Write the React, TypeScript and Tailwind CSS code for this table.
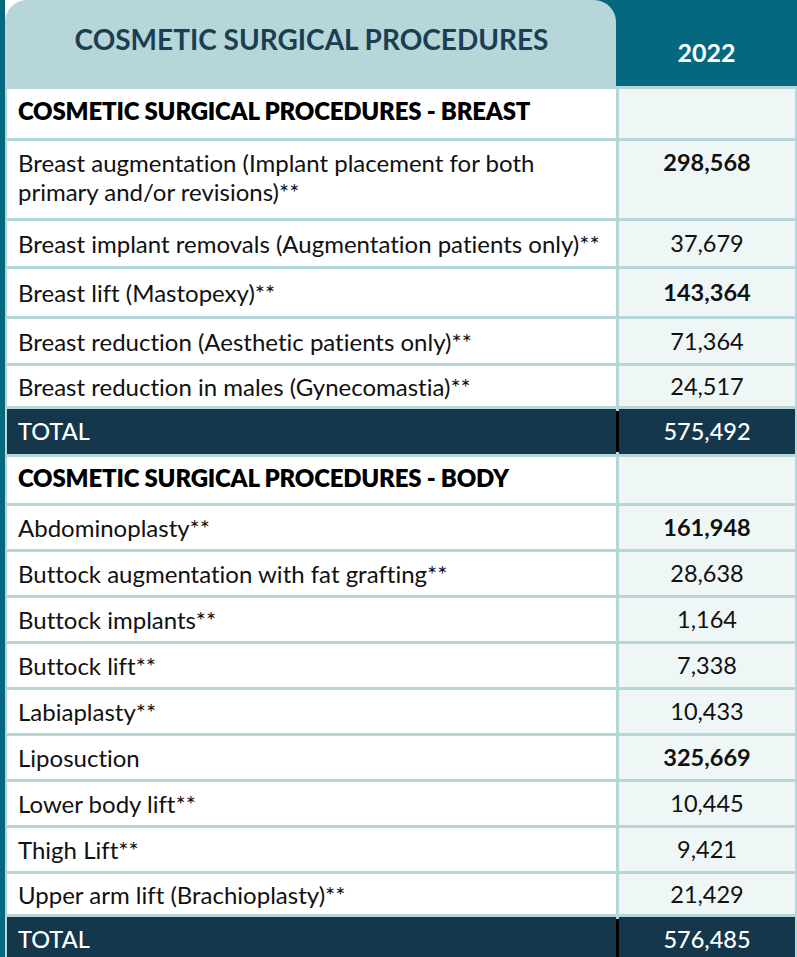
import React from "react";

type Row = {
  label: string;
  value?: string;
  kind: "section" | "item" | "total";
  bold?: boolean;
  h: string;
};

// heights measured off the reference, 3px light-blue rule between rows
const rows: Row[] = [
  { label: "COSMETIC SURGICAL PROCEDURES - BREAST", kind: "section", h: "h-[49px]" },
  {
    label: "Breast augmentation (Implant placement for both primary and/or revisions)**",
    value: "298,568",
    kind: "item",
    bold: true,
    h: "h-[77px]",
  },
  { label: "Breast implant removals (Augmentation patients only)**", value: "37,679", kind: "item", h: "h-[45px]" },
  { label: "Breast lift (Mastopexy)**", value: "143,364", kind: "item", bold: true, h: "h-[47px]" },
  { label: "Breast reduction (Aesthetic patients only)**", value: "71,364", kind: "item", h: "h-[44px]" },
  { label: "Breast reduction in males (Gynecomastia)**", value: "24,517", kind: "item", h: "h-[40px]" },
  { label: "TOTAL", value: "575,492", kind: "total", h: "h-[45px]" },
  { label: "COSMETIC SURGICAL PROCEDURES - BODY", kind: "section", h: "h-[46px]" },
  { label: "Abdominoplasty**", value: "161,948", kind: "item", bold: true, h: "h-[43px]" },
  { label: "Buttock augmentation with fat grafting**", value: "28,638", kind: "item", h: "h-[43px]" },
  { label: "Buttock implants**", value: "1,164", kind: "item", h: "h-[43px]" },
  { label: "Buttock lift**", value: "7,338", kind: "item", h: "h-[43px]" },
  { label: "Labiaplasty**", value: "10,433", kind: "item", h: "h-[43px]" },
  { label: "Liposuction", value: "325,669", kind: "item", bold: true, h: "h-[43px]" },
  { label: "Lower body lift**", value: "10,445", kind: "item", h: "h-[43px]" },
  { label: "Thigh Lift**", value: "9,421", kind: "item", h: "h-[43px]" },
  { label: "Upper arm lift (Brachioplasty)**", value: "21,429", kind: "item", h: "h-[40px]" },
  { label: "TOTAL", value: "576,485", kind: "total", h: "h-[46px]" },
];

function TableRow({ row }: { row: Row }) {
  const twoLine = row.h === "h-[77px]";

  if (row.kind === "total") {
    return (
      <>
        <div className={`${row.h} bg-[#15374b] flex items-center pl-[11px] text-[23.5px] font-medium text-white`}>
          {row.label}
        </div>
        <div className={`${row.h} bg-[#15374b] flex items-center justify-center text-[23.5px] font-medium text-white relative`}>
          <span className="absolute left-[-3px] top-[2px] bottom-[2px] w-[3px] bg-black" />
          {row.value}
        </div>
      </>
    );
  }

  if (row.kind === "section") {
    return (
      <>
        <div className={`${row.h} bg-white flex items-center pl-[11px] pb-[5px] text-[24px] font-extrabold tracking-[-0.2px] text-black`}>
          {row.label}
        </div>
        <div className={`${row.h} bg-[#eef6f6]`} />
      </>
    );
  }

  return (
    <>
      <div
        className={`${row.h} bg-white flex ${twoLine ? "items-start pt-[7px] pr-[60px]" : "items-center whitespace-nowrap"} pl-[11px] text-[24px] leading-[29px] text-[#111]`}
      >
        <span>{row.label}</span>
      </div>
      <div
        className={`${row.h} bg-[#eef6f6] flex justify-center ${twoLine ? "items-start pt-[7px]" : "items-center"} text-[23.5px] leading-[29px] text-[#111] ${row.bold ? "font-bold" : ""}`}
      >
        {row.value}
      </div>
    </>
  );
}

export default function App() {
  return (
    <div className="w-[797px] h-[957px] overflow-hidden bg-white flex font-['Lato','Liberation_Sans',sans-serif] [font-variant-ligatures:none]">
      <div className="w-[5px] shrink-0 bg-[#06687f]" />
      <div className="flex-1 flex flex-col min-h-0">
        {/* header */}
        <div className="shrink-0 grid grid-cols-[611px_1fr] h-[86px] bg-[linear-gradient(to_right,#ffffff_50%,#06687f_50%)]">
          <div className="bg-[#b6d6da] rounded-t-[22px] flex items-start justify-center pt-[22px] pl-[2px] text-[28px] leading-[34px] font-bold text-[#1b3e52]">
            COSMETIC SURGICAL PROCEDURES
          </div>
          <div className="bg-[#06687f] flex items-center justify-center pt-[20px] text-[25px] font-bold text-white">
            2022
          </div>
        </div>

        {/* body */}
        <div className="flex-1 min-h-0 overflow-hidden bg-[#b6d6da] pt-[3px] px-[2px]">
          <div className="grid grid-cols-[609px_176px] gap-x-[3px] gap-y-[3px]">
            {rows.map((row, i) => (
              <TableRow key={i} row={row} />
            ))}
          </div>
        </div>
      </div>
    </div>
  );
}
